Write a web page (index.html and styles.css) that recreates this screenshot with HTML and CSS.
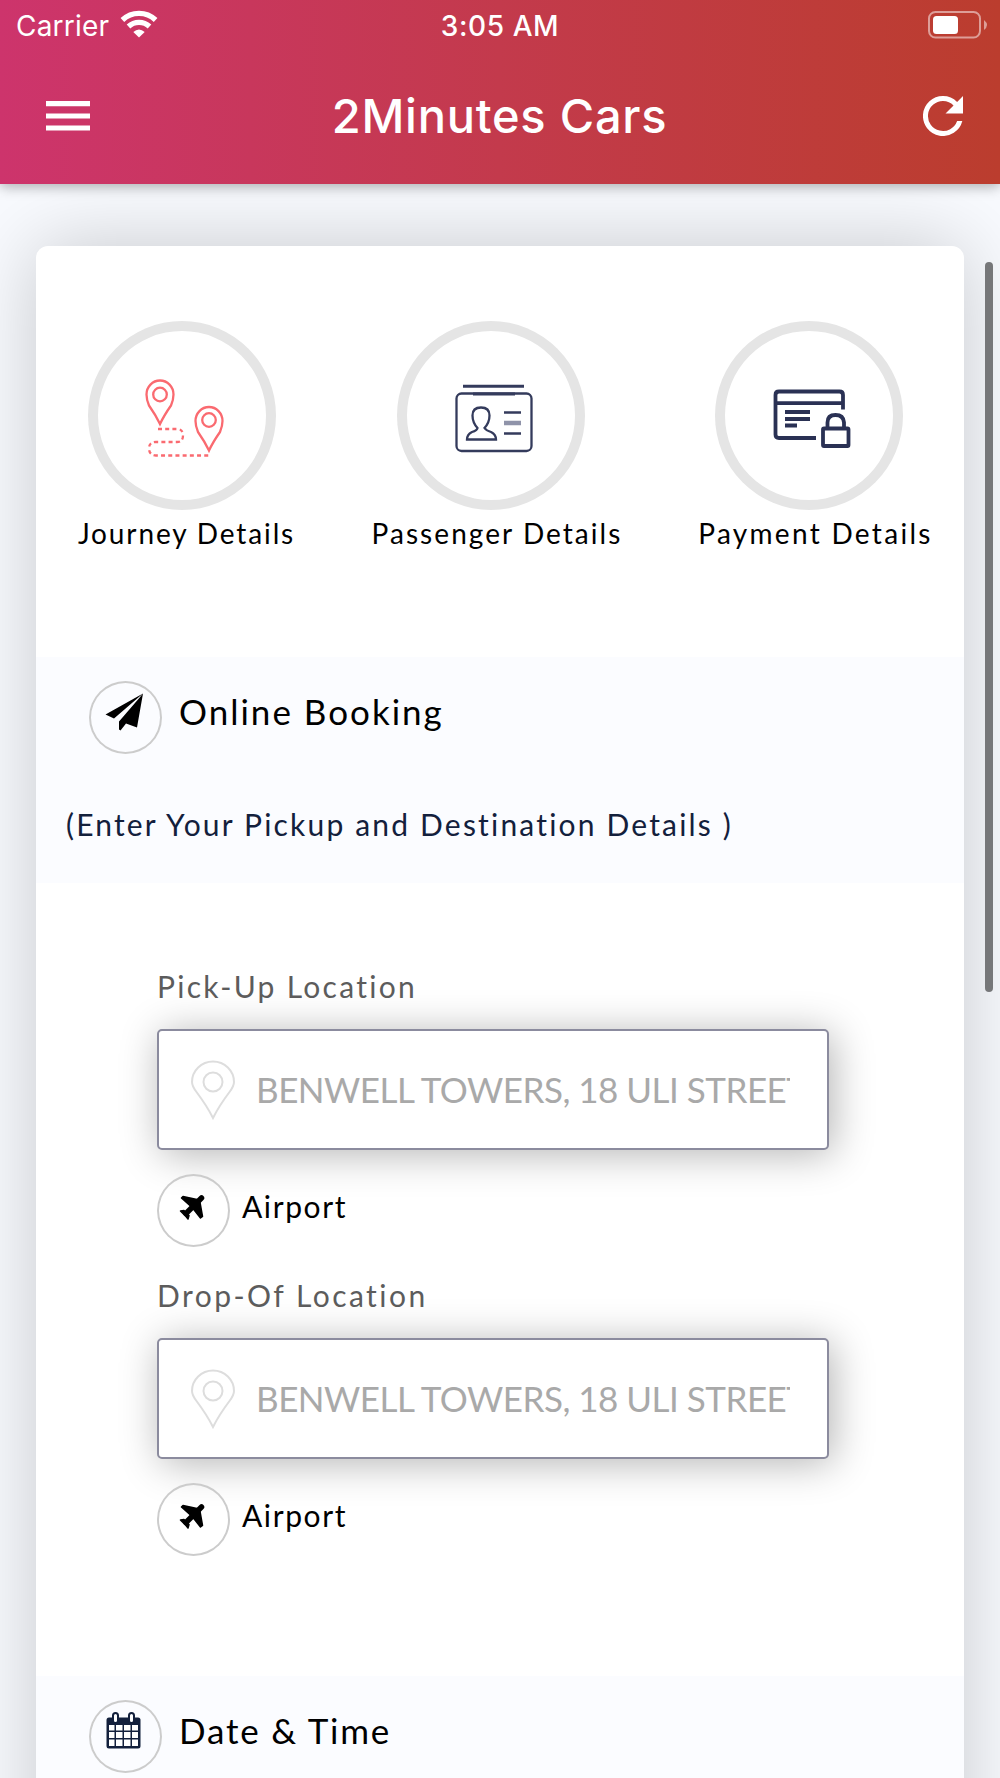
FILE: index.html
```html
<!DOCTYPE html>
<html lang="en">
<head>
<meta charset="utf-8">
<title>2Minutes Cars</title>
<link rel="stylesheet" href="styles.css">
</head>
<body>
<svg class="defs" width="0" height="0" aria-hidden="true">
  <symbol id="plane" viewBox="0 0 73 73">
    <path d="M44.500 24 L29 39.500" stroke="#000" stroke-width="5.500" stroke-linecap="round"/>
    <path d="M24.500 24 L26 22.500 L40 25.500 L43 28.500 L45.500 42.500 L43.500 44 L36 34.500 L34 32.500 Z M23.500 37 L27 36.500 L32 41.500 L31 45 L29 42.500 Z" fill="#000" stroke="#000" stroke-linejoin="round" stroke-width="1.500"/>
  </symbol>
  <symbol id="pin" viewBox="0 0 46 60">
    <path d="M23 58 Q17 46 6.500 32 Q2 26 2 22 A21 20.500 0 0 1 44 22 Q44 26 39.500 32 Q29 46 23 58 Z"/>
    <circle cx="23" cy="22" r="9.500"/>
  </symbol>
</svg>
<header class="header">
  <div class="status">
    <div class="side">
      <span class="carrier">Carrier</span>
      <svg class="wifi" width="38" height="28" viewBox="0 0 38 28">
        <g fill="none" stroke="#fff" stroke-width="5.300"><path d="M2.400 10 A24 24 0 0 1 35.600 10"/><path d="M8.500 16.500 A15.500 15.500 0 0 1 29.500 16.500"/></g>
        <path d="M19 27.500 L13.300 22 Q19 16.800 24.700 22 Z" fill="#fff"/>
      </svg>
    </div>
    <span class="clock">3:05 AM</span>
    <div class="side end">
      <svg class="battery" width="60" height="28" viewBox="0 0 60 28">
        <rect x="1" y="1" width="51" height="25.500" rx="6.500" fill="none" stroke="#fff" stroke-opacity=".5" stroke-width="2"/>
        <rect x="5" y="5" width="25" height="18" rx="3.500" fill="#fff"/>
        <path d="M56 9 Q62 14 56 19 Z" fill="#fff" fill-opacity=".5"/>
      </svg>
    </div>
  </div>
  <div class="bar">
    <div class="side"><svg width="44" height="30" viewBox="0 0 44 30"><path d="M0 2.700H44M0 15H44M0 27H44" stroke="#fff" stroke-width="5.200"/></svg></div>
    <h1 class="title">2Minutes Cars</h1>
    <div class="side end"><svg width="40" height="40" viewBox="4 4 16 16"><path fill="#fff" d="M17.650 6.350A7.958 7.958 0 0 0 12 4a8 8 0 1 0 7.730 10h-2.080A6 6 0 1 1 12 6c1.660 0 3.140.69 4.220 1.780L13 11h7V4z"/></svg></div>
  </div>
</header>
<main class="card">
  <nav class="steps">
    <div class="step">
      <svg class="ring" viewBox="0 0 188 188"><g fill="none" stroke="#fa6a70" stroke-width="2.300">
        <path d="M72 102.500 Q68 94 61 84 Q58.500 78 58.500 73 A13.500 14 0 0 1 85.500 73 Q85.500 78 83 84 Q76 94 72 102.500Z"/><circle cx="72" cy="73" r="6.800"/>
        <path d="M121 129 Q117 120.500 110 110.500 Q107.500 104.500 107.500 99.500 A13.500 14 0 0 1 134.500 99.500 Q134.500 104.500 132 110.500 Q125 120.500 121 129Z"/><circle cx="121" cy="98.500" r="6.800"/>
        <path d="M70 107.500H89Q95 107.500 95 114T89 120.500H68Q61 120.500 61 127T68 134H123" stroke-dasharray="4 3.200"/></g></svg>
      <span class="label journey">Journey Details</span>
    </div>
    <div class="step">
      <svg class="ring" viewBox="0 0 188 188"><g fill="none" stroke="#343b5c" stroke-width="2.300">
        <rect x="59.500" y="72" width="75" height="57.500" rx="5"/><path d="M66 64.700H127M76 72.500H118" stroke-width="3"/>
        <path d="M80.500 106.500 Q75.500 101 75.500 94 Q75.500 86 84 86 Q92.500 86 92.500 94 Q92.500 101 87.500 106.500 Q89 109 94 110.500 Q99 113 99 118 H70 Q70 113 75 110.500 Q80 109 80.500 106.500Z"/>
        <path d="M107 91H124M107 112H124"/><path d="M107 101.500H124" stroke="#8f93a9" stroke-width="4.500"/></g></svg>
      <span class="label passenger">Passenger Details</span>
    </div>
    <div class="step">
      <svg class="ring" viewBox="0 0 188 188"><g fill="none" stroke="#2a3154" stroke-width="3.800">
        <path d="M128 88V73.500Q128 70 124.500 70H64Q60.500 70 60.500 73.500V113Q60.500 116.500 64 116.500H101M60.500 81.700H128"/>
        <path d="M70 90.500H95M70 97.500H95M70 104H82"/><rect x="108" y="107" width="25.500" height="17.500" rx="1"/><path d="M112.500 107V101Q112.500 93.500 120.500 93.500T129 101V107"/></g></svg>
      <span class="label payment">Payment Details</span>
    </div>
  </nav>
  <section class="band booking">
    <div class="heading">
      <svg class="badge" viewBox="0 0 73 73"><path d="M16.500 33.500 L54 12.500 L25 37.500Z M54 12.500 L48 46.500 L37 42.500 L31.500 49.500 L30 48.500 V40.500 L49 18.500Z"/></svg>
      <h2 class="h-booking">Online Booking</h2>
    </div>
    <p class="hint">(Enter Your Pickup and Destination Details )</p>
  </section>
  <form class="places">
    <div class="place">
      <label class="caption pickup">Pick-Up Location</label>
      <div class="field"><svg class="pin" width="46" height="60"><use href="#pin"/></svg><span class="value">BENWELL TOWERS, 18 ULI STREET</span></div>
      <div class="airport"><svg class="badge"><use href="#plane"/></svg><span>Airport</span></div>
    </div>
    <div class="place">
      <label class="caption dropoff">Drop-Of Location</label>
      <div class="field"><svg class="pin" width="46" height="60"><use href="#pin"/></svg><span class="value">BENWELL TOWERS, 18 ULI STREET</span></div>
      <div class="airport"><svg class="badge"><use href="#plane"/></svg><span>Airport</span></div>
    </div>
  </form>
  <section class="band">
    <div class="heading">
      <svg class="badge" viewBox="0 0 73 73"><rect x="17.500" y="17.500" width="34" height="31" rx="2.500" fill="#13203c"/><path fill="#fff" d="M20 25h5.500v5.500H20zM27 25h6.500v5.500H27zM35 25h6.500v5.500H35zM43 25h6v5.500h-6zM20 32h5.500v6H20zM27 32h6.500v6H27zM35 32h6.500v6H35zM43 32h6v6h-6zM20 39.500h5.500v6.500H20zM27 39.500h6.500v6.500H27zM35 39.500h6.500v6.500H35zM43 39.500h6v6.500h-6z"/><g fill="#fff" stroke="#13203c" stroke-width="2"><rect x="24" y="13" width="5" height="10" rx="2.500"/><rect x="40" y="13" width="5" height="10" rx="2.500"/></g></svg>
      <h2 class="h-date">Date &amp; Time</h2>
    </div>
  </section>
</main>
<div class="scrollbar"></div>
</body>
</html>
```
FILE: styles.css
```css
* { box-sizing: border-box; }
body { margin: 0; height: 1778px; overflow: hidden; background: #f8fafe; color: #000; font-family: Lato, "Open Sans", sans-serif; }
svg { display: block; flex: none; }
h1, h2, p { margin: 0; font-weight: 400; }
span, h1, h2, p, label { white-space: nowrap; }
.defs { position: absolute; }
.header { position: relative; height: 184px; color: #fff; font-family: Inter, sans-serif; background: linear-gradient(90deg, #cd346c, #c33a4c 50%, #bb3d2e); box-shadow: 0 3px 12px rgba(0, 0, 0, .3); }
.side { display: flex; flex: 1; align-items: center; }
.end { justify-content: flex-end; }
.status { display: flex; height: 51px; padding: 0 12px 0 16px; align-items: center; font-size: 28px; }
.carrier { letter-spacing: .2px; }
.wifi { margin: -3px 0 0 11px; }
.clock { margin-right: 4px; font-weight: 500; letter-spacing: .6px; }
.battery { margin-top: -2px; }
.bar { display: flex; align-items: center; height: 130px; padding: 0 37px 0 46px; }
.title { margin: -2px 10px 0 0; font-size: 47px; font-weight: 500; letter-spacing: .75px; }
.card { margin: 62px 36px 0; height: 1656px; border-radius: 12px; background: #fff; box-shadow: 0 0 80px rgba(0, 0, 0, .2); }
.steps { display: grid; grid-template-columns: 309px 318px 188px; height: 411px; padding: 75px 0 0 52px; }
.step { display: flex; flex-direction: column; align-items: center; gap: 6px; width: 188px; }
.ring { width: 188px; height: 189px; border-radius: 50%; box-shadow: inset 0 0 0 10px #e5e5e5; }
.label { font-size: 28px; line-height: 34px; }
.journey { padding-left: 9px; letter-spacing: 1.87px; }
.passenger { padding-left: 12px; letter-spacing: 2.05px; }
.payment { padding-left: 13px; letter-spacing: 2.3px; }
.band { height: 226px; background: #fbfcff; }
.heading { display: flex; gap: 17px; padding: 24px 0 0 53px; }
.heading h2 { font-size: 35px; line-height: 60px; }
.heading .h-booking { letter-spacing: 2px; }
.heading .h-date { letter-spacing: 1.8px; }
.badge { width: 73px; height: 73px; border-radius: 50%; box-shadow: inset 0 0 0 2px #ccc; }
.hint { padding: 50px 0 0 30px; font-size: 30px; line-height: 40px; letter-spacing: 2.18px; color: #13203c; }
.places { height: 793px; padding: 83px 135px 0 121px; }
.place { height: 309px; }
.caption { display: block; height: 63px; font-size: 30px; line-height: 40px; color: #5c5c5c; }
.pickup { letter-spacing: 2.3px; }
.dropoff { letter-spacing: 2.45px; }
.field { display: flex; align-items: center; height: 121px; padding: 0 37px 0 31px; border: 2px solid #8b8b9e; border-radius: 5px; background: #fff; box-shadow: 4px 4px 40px rgba(0, 0, 0, .3); }
.pin { fill: none; stroke: #ddd; stroke-width: 2; }
.value { flex: 1; overflow: hidden; margin: -2px 0 0 20px; font-size: 35px; line-height: 44px; letter-spacing: -.5px; color: #a9a9a9; }
.airport { display: flex; gap: 12px; margin-top: 24px; font-size: 30px; line-height: 64px; letter-spacing: 1.6px; }
.scrollbar { position: absolute; left: 985px; top: 262px; width: 8px; height: 730px; border-radius: 4px; background: #767779; }
```
